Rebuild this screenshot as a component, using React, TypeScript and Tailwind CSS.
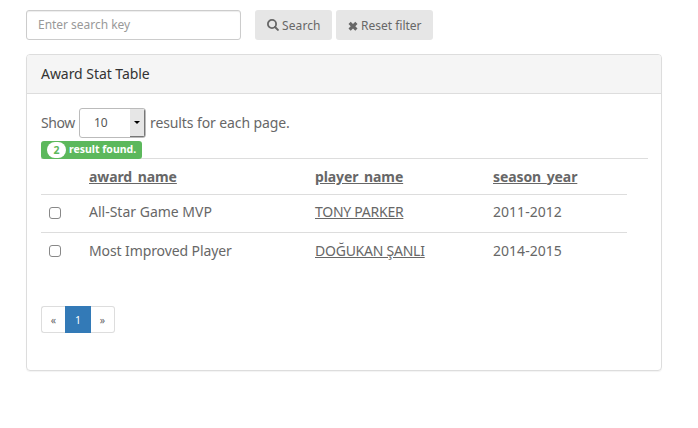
import React from "react";

const rows = [
  {
    award: "All-Star Game MVP",
    player: "TONY PARKER",
    season: "2011-2012",
    awardClass: "",
    playerClass: "tracking-[-0.26px]",
    rowClass: "pb-[3px]",
    checkClass: "mt-[2px]",
  },
  {
    award: "Most Improved Player",
    player: "DOĞUKAN ŞANLI",
    season: "2014-2015",
    awardClass: "tracking-[-0.1px]",
    playerClass: "tracking-[-0.24px]",
    rowClass: "pb-[2px]",
    checkClass: "",
  },
];

const columns = "grid w-[586px] grid-cols-[48px_226px_178px_134px] items-center";

function SearchIcon() {
  return (
    <svg viewBox="0 0 12 12" className="mr-[3px] size-[12px] shrink-0" fill="none" stroke="currentColor">
      <circle cx="5" cy="5" r="4.100" strokeWidth="1.800" />
      <path d="M8 8 10.900 10.900" strokeWidth="2" strokeLinecap="round" />
    </svg>
  );
}

function CrossIcon() {
  return (
    <svg viewBox="0 0 10 10" className="mt-px mr-[3px] size-[10px] shrink-0" fill="currentColor">
      <path d="M2.700 0.700 5 3 7.300 0.700 9.500 2.900 7.300 5.200 9.500 7.500 7.300 9.700 5 7.400 2.700 9.700 0.500 7.500 2.700 5.200 0.500 2.900Z" />
    </svg>
  );
}

export default function App() {
  return (
    <div className="h-[428px] w-[698px] bg-white pt-[10px] pl-[26px] font-['Noto_Sans','Open_Sans',sans-serif] text-[14px] leading-5 text-[#676767]">
      <div className="flex h-[30px]">
        <input
          placeholder="Enter search key"
          className="h-[30px] w-[215px] rounded-[3px] border border-[#ccc] px-[11px] pb-[2px] text-[12px] tracking-[-0.03px] shadow-[inset_0_1px_1px_rgba(0,0,0,0.075)] placeholder:text-[#999]"
        />
        <button className="ml-[14px] flex w-[77px] items-center rounded-[3px] bg-[#e6e6e6] pl-[12px] text-[12px] whitespace-nowrap">
          <SearchIcon />
          <span className="pt-px tracking-[0.1px]">Search</span>
        </button>
        <button className="ml-[4px] flex w-[97px] items-center rounded-[3px] bg-[#e6e6e6] pl-[12px] text-[12px] whitespace-nowrap">
          <CrossIcon />
          <span className="pt-px">Reset filter</span>
        </button>
      </div>

      <div className="mt-[14px] h-[317px] w-[636px] rounded-[4px] border border-[#ddd] shadow-[0_1px_1px_rgba(0,0,0,0.05)]">
        <div className="flex h-[39px] items-center rounded-t-[3px] border-b border-[#ddd] bg-[#f5f5f5] px-[14px] tracking-[-0.05px] text-[#333]">
          Award Stat Table
        </div>
        <div className="px-[14px] pt-[14px]">
          <div className="flex h-[30px] items-center">
            <span className="w-[38px] tracking-[-0.4px]">Show</span>
            <div className="flex h-[30px] w-[67px] items-center overflow-hidden rounded-[3px] border border-[#bbb] text-[12px] text-[#555]">
              <span className="w-[50px] pl-[14px]">10</span>
              <span className="flex h-full w-[15px] items-center justify-center border-r border-b border-[#777] bg-[#e6e6e6]">
                <svg viewBox="0 0 6 3" className="h-[3px] w-[6px]">
                  <path d="M0 0H6L3 3Z" fill="#000" />
                </svg>
              </span>
            </div>
            <span className="ml-[4px] tracking-[-0.1px]">results for each page.</span>
          </div>

          <div className="mt-[3px] h-[18px] w-[607px] border-b border-[#ddd]">
            <div className="flex h-[18px] w-[101px] items-center rounded-[3px] bg-[#5cb85c] pl-[6px] text-[10.500px] font-bold whitespace-nowrap text-white">
              <span className="mr-[3px] flex h-[16px] w-[19px] items-center justify-center rounded-full bg-white text-[#5cb85c]">2</span>
              <span className="pb-[2px]">result found.</span>
            </div>
          </div>

          <div className={`${columns} h-[35px] pt-px font-bold tracking-[-0.1px]`}>
            <span />
            <span className="underline underline-offset-1">award_name</span>
            <span className="underline underline-offset-1">player_name</span>
            <span className="underline underline-offset-1">season_year</span>
          </div>
          {rows.map((row) => (
            <div key={row.player} className={`${columns} h-[38px] border-t border-[#ddd] ${row.rowClass}`}>
              <input
                type="checkbox"
                className={`ml-[8px] size-[12px] appearance-none rounded-[3px] border border-[#888] bg-white ${row.checkClass}`}
              />
              <span className={row.awardClass}>{row.award}</span>
              <span className={`underline underline-offset-1 ${row.playerClass}`}>{row.player}</span>
              <span className="tracking-[0.03px]">{row.season}</span>
            </div>
          ))}

          <div className="mt-[36px] flex h-[27px] w-[74px] text-[10.500px]">
            <span className="flex w-[24px] items-center justify-center rounded-l-[3px] border border-r-0 border-[#ddd]">«</span>
            <span className="flex w-[26px] items-center justify-center bg-[#337ab7] text-white">1</span>
            <span className="flex w-[24px] items-center justify-center rounded-r-[3px] border border-l-0 border-[#ddd]">»</span>
          </div>
        </div>
      </div>
    </div>
  );
}
